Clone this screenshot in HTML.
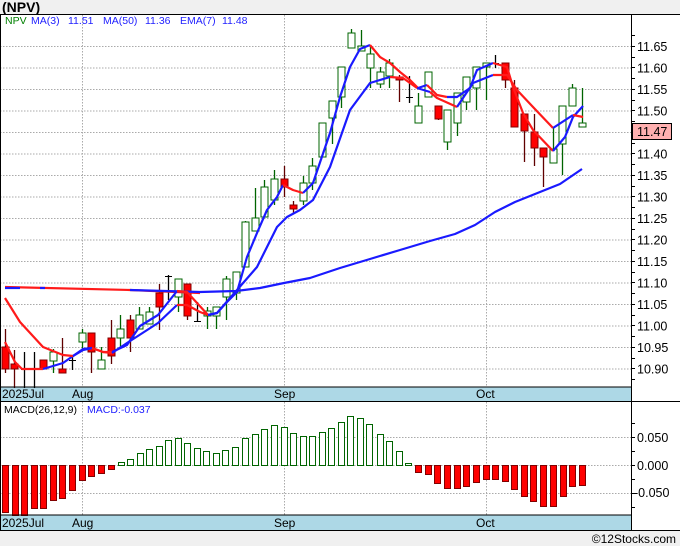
<!DOCTYPE html>
<html><head><meta charset="utf-8">
<style>
html,body{margin:0;padding:0;background:#f0f0f0;}
body{width:680px;height:546px;overflow:hidden;position:relative;font-family:"Liberation Sans",sans-serif;}
svg{position:absolute;left:0;top:0;}
svg text{font-family:"Liberation Sans",sans-serif;}
</style></head><body>
<svg id="s" width="680" height="546" viewBox="0 0 680 546" xmlns="http://www.w3.org/2000/svg">
<rect x="0" y="14" width="680" height="516" fill="#fff"/>
<text x="2" y="12" font-size="14" font-weight="bold" fill="#000">(NPV)</text>
<g id="grid" stroke="#aaa" stroke-dasharray="1.5,1.5" stroke-width="1"></g>
<rect x="0" y="387" width="632" height="14" fill="#add8e6"/>
<rect x="0" y="515" width="632" height="15" fill="#add8e6"/>
<g id="macd"></g>
<g id="candles"></g>
<g id="lines" fill="none" stroke-width="2.2" stroke-linejoin="round"></g>
<line x1="0" y1="14.5" x2="680" y2="14.5" stroke="#000"/>
<line x1="0.5" y1="14" x2="0.5" y2="530" stroke="#000"/>
<line x1="0" y1="387" x2="632" y2="387" stroke="#000"/>
<line x1="0" y1="401.5" x2="680" y2="401.5" stroke="#000"/>
<line x1="0" y1="515" x2="632" y2="515" stroke="#000"/>
<line x1="0" y1="530.5" x2="680" y2="530.5" stroke="#000"/>
<line x1="631.5" y1="14" x2="631.5" y2="530" stroke="#000"/>
<g id="ticks" stroke="#000"></g>
<g font-size="12" fill="#000">
<text x="2" y="398">2025Jul</text><text x="72" y="398">Aug</text><text x="274" y="398">Sep</text><text x="476" y="398">Oct</text>
<text x="2" y="527">2025Jul</text><text x="72" y="527">Aug</text><text x="274" y="527">Sep</text><text x="476" y="527">Oct</text>
</g>
<g font-size="12.5" fill="#000" id="plabels"></g>
<rect x="632.5" y="123.5" width="39" height="16" fill="#ffb0b0" stroke="#000"/>
<text x="637" y="136" font-size="12.5" fill="#000">11.47</text>
<g font-size="12.5" fill="#000">
<text x="637" y="442">0.050</text><text x="637" y="470">0.000</text><text x="634" y="497">-0.050</text>
</g>
<g font-size="10.5">
<text x="5" y="24" fill="#008000">NPV</text>
<text x="31" y="24" fill="#2222ff">MA(3)</text>
<text x="68" y="24" fill="#2222ff">11.51</text>
<text x="103" y="24" fill="#2222ff">MA(50)</text>
<text x="145" y="24" fill="#2222ff">11.36</text>
<text x="180" y="24" fill="#2222ff">EMA(7)</text>
<text x="222" y="24" fill="#2222ff">11.48</text>
<text x="4" y="413" fill="#000">MACD(26,12,9)</text>
<text x="87" y="413" fill="#2222ff">MACD:-0.037</text>
</g>
<text x="676" y="543" font-size="12" fill="#000" text-anchor="end">©12Stocks.com</text>
</svg>
<script>
var NS="http://www.w3.org/2000/svg";
function el(p,t,a){var e=document.createElementNS(NS,t);for(var k in a)e.setAttribute(k,a[k]);document.getElementById(p).appendChild(e);return e;}
var hy=[46,67.5,89,110.5,132,153.5,175,196.5,218,239.5,261,282.5,304,325.5,347,368.5];
hy.forEach(function(y){el("grid","line",{x1:0,x2:631,y1:y+.5,y2:y+.5});});
[437,465,493].forEach(function(y){el("grid","line",{x1:0,x2:631,y1:y+.5,y2:y+.5});});
[82,284,486].forEach(function(x){el("grid","line",{x1:x+.5,x2:x+.5,y1:15,y2:387});el("grid","line",{x1:x+.5,x2:x+.5,y1:402,y2:515});});
var pl=["11.65","11.60","11.55","11.50",null,"11.40","11.35","11.30","11.25","11.20","11.15","11.10","11.05","11.00","10.95","10.90"];
pl.forEach(function(t,i){if(t){var e=el("plabels","text",{x:637,y:hy[i]+5});e.textContent=t;}});
for(var y=35;y<387;y+=10.75)el("ticks","line",{x1:632,x2:635,y1:Math.round(y)+.5,y2:Math.round(y)+.5});
for(var y=423;y<515;y+=14)el("ticks","line",{x1:632,x2:635,y1:y+.5,y2:y+.5});
var C=[[5,347,369,329,373,'r'],[14,364,369,350,388,'r'],[24,369,369,352,388,'k'],[34,369,369,352,388,'k'],[43,360,369,360,369,'r'],
[53,352,361,349,373,'g'],[62,369,373,338,373,'r'],[72,360,360,356,370,'k'],[82,333,342,329,350,'g'],[91,333,352,333,373,'r'],
[101,360,369,347,369,'g'],[111,338,356,320,364,'r'],[120,329,338,315,347,'g'],[130,320,338,315,352,'r'],[139,315,329,307,329,'g'],
[149,312,324,307,324,'g'],[159,293,307,284,330,'r'],[168,276,276,275,300,'k'],[178,279,297,279,312,'g'],[187,284,316,284,320,'r'],
[197,321,321,302,321,'k'],[207,311,316,307,329,'g'],[216,307,316,307,329,'g'],[226,279,297,276,320,'g'],[236,272,293,272,300,'g'],
[245,222,267,221,267,'g'],[255,218,231,188,231,'g'],[264,187,217,180,217,'g'],[274,179,200,170,205,'g'],[284,179,187,166,197,'r'],
[293,205,209,201,213,'r'],[303,183,201,176,205,'g'],[312,166,183,158,190,'g'],[322,123,157,123,157,'g'],[332,101,118,101,144,'g'],
[341,67,97,67,108,'g'],[351,33,48,29,48,'g'],[361,46,51,30,51,'g'],[370,54,68,47,88,'g'],[380,72,84,67,88,'g'],
[389,63,76,59,88,'g'],[399,77,80,75,102,'r'],[409,97,97,76,103,'k'],[418,106,123,93,123,'g'],[428,72,97,72,97,'g'],
[438,106,119,106,120,'r'],[447,110,142,110,150,'g'],[457,93,123,93,136,'g'],[466,77,102,77,110,'g'],[476,67,88,67,110,'g'],
[486,63,67,63,100,'g'],[495,63,63,55,68,'k'],[505,63,80,63,88,'r'],[514,88,127,80,127,'r'],[524,114,131,114,162,'r'],
[534,132,148,114,166,'r'],[543,148,157,148,187,'r'],[553,149,163,128,163,'g'],[562,106,144,106,175,'g'],[572,88,106,84,106,'g'],
[582,123,127,88,127,'g']];
C.forEach(function(c){
 var col=c[5]=='g'?'#006400':(c[5]=='r'?'#600000':'#000');
 el("candles","line",{x1:c[0]+.5,x2:c[0]+.5,y1:c[3],y2:c[4],stroke:col,"stroke-width":1.3});
 if(c[5]=='k'){el("candles","line",{x1:c[0]-3,x2:c[0]+4,y1:c[1]+.5,y2:c[1]+.5,stroke:col});return;}
 var h=Math.max(c[2]-c[1],3);
 el("candles","rect",{x:c[0]-3,y:c[1],width:7,height:h,fill:c[5]=='g'?'#fff':'#ff0000',stroke:c[5]=='g'?'#006400':'#800000',"stroke-width":1});
});
function pl2(col,pts){el("lines","polyline",{points:pts,stroke:col});}
var R="#ff1a1a",B="#1a1aff";
pl2(R,"5,287 130,290 200,293");pl2(B,"5,288 20,288");pl2(B,"40,288 45,288");
pl2(B,"130,290 200,292 236,291 260,288 284,283 310,278 340,268 370,259 400,250 430,241 455,234 475,225 495,212 515,202 540,192 560,184 582,169");
pl2(R,"5,342 15,362 22,369 43,369");pl2(B,"43,369 63,363 83,349 92,348");pl2(R,"92,348 103,352 112,352");
pl2(B,"112,352 127,345 140,326 158,315 177,291");pl2(R,"177,291 187,292 208,315");
pl2(B,"208,315 217,313 227,302 237,292 247,257 257,233 267,210 277,197 283,185");pl2(R,"283,185 293,190 303,193");
pl2(B,"303,193 313,183 330,133 340,97 350,67 360,49 370,45");pl2(R,"370,45 380,57 390,63 400,72 410,80 418,88");
pl2(B,"418,88 427,85");pl2(R,"427,85 437,95 447,97");pl2(B,"447,97 457,97 470,88 477,70 493,63");
pl2(R,"493,63 507,67 513,87 523,113 533,130 553,151");pl2(B,"553,151 565,137 573,117 583,106");
pl2(R,"5,298 20,322 43,347 63,355 73,356");pl2(B,"73,356 83,350 92,348");pl2(R,"92,348 103,352 112,353");
pl2(B,"112,353 127,343 158,323 177,305");pl2(R,"177,305 187,305 200,312 208,315");
pl2(B,"208,315 217,313 237,290 257,267 277,227 287,217 300,210 313,200 330,167 350,110 370,83 390,77");
pl2(R,"390,77 403,78 417,88");pl2(B,"417,88 430,92");pl2(R,"430,92 437,98 457,107");pl2(B,"457,107 473,83 493,75");
pl2(R,"493,75 507,75 517,90 533,107 553,128");pl2(B,"553,128 573,115");pl2(R,"573,115 583,117");
var M=[[5,512],[15,515],[24,515],[34,508],[43,508],[53,500],[62,498],[72,490],[82,480],[91,476],[101,473],[111,469],
[121,462],[130,459],[140,453],[149,449],[159,446],[168,440],[178,438],[187,443],[197,448],[206,451],[216,453],[225,450],[235,447],[245,438],[255,434],[264,429],[274,425],[284,427],[293,433],[303,436],[312,436],[322,432],[331,428],[341,422],[350,416],[360,418],[369,424],[380,434],[389,441],[399,451],[408,463],
[418,472],[428,474],[437,483],[447,488],[457,488],[466,486],[476,482],[486,479],[495,479],[505,481],[514,489],[524,496],[533,501],[543,506],[553,506],[563,496],[572,486],[582,485]];
M.forEach(function(m){var z=465;
 if(m[1]<z)el("macd","rect",{x:m[0]-3+.5,y:m[1]+.5,width:6,height:z-m[1],fill:"#fff",stroke:"#006400"});
 else el("macd","rect",{x:m[0]-3+.5,y:z+.5,width:6,height:m[1]-z,fill:"#ff0000",stroke:"#800000"});
});
</script>
</body></html>
